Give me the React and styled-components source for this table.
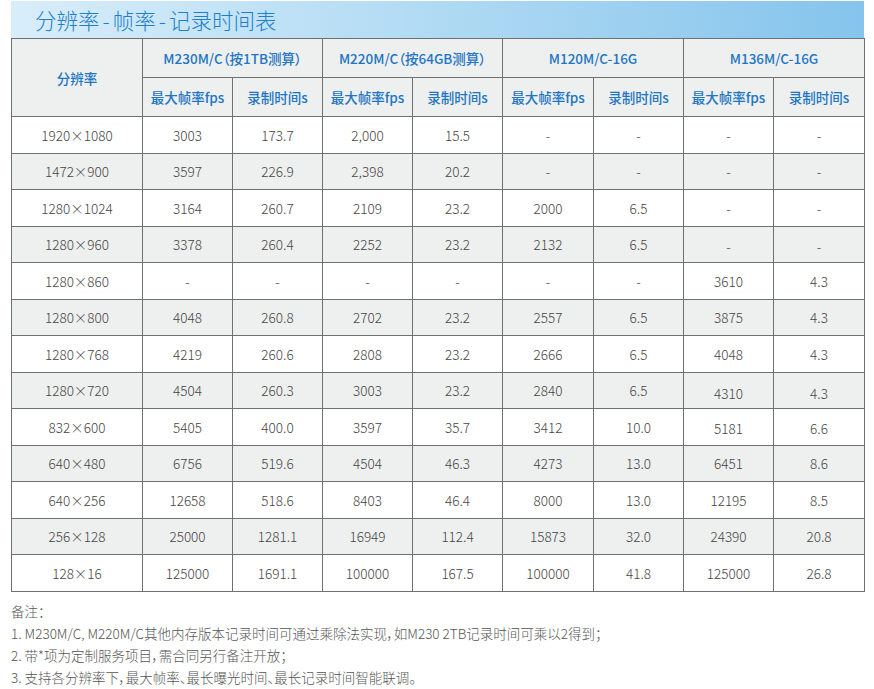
import React from "react";
import styled, { createGlobalStyle } from "styled-components";

const Global = createGlobalStyle`
  html, body { margin: 0; padding: 0; background: #fff; }
  body { font-family: "Noto Sans CJK SC", "Noto Sans", sans-serif; }
`;

const Page = styled.div`
  width: 853px;
  padding: 1px 0 0 11px;
`;

const TitleBar = styled.div`
  height: 37px;
  display: flex;
  align-items: center;
  padding-left: 24px;
  background: linear-gradient(to right, #d8edfa 0%, #b4dcf4 45%, #85c4ec 100%);
`;

const Title = styled.h1`
  margin: 0;
  font-family: "Noto Sans CJK SC", sans-serif;
  font-weight: 300;
  font-size: 21.5px;
  letter-spacing: 0;
  color: #1f80c9;
  line-height: 1;
`;

const Dash = styled.span`
  margin: 0 3px;
`;

const Table = styled.table`
  width: 853px;
  border-collapse: collapse;
  table-layout: fixed;
  font-family: "Noto Sans CJK SC", sans-serif;
`;

const HeadCell = styled.th`
  height: 38px;
  padding: 0;
  border: 1px solid #707070;
  background: #eeefef;
  color: #2176c4;
  font-weight: 500;
  font-size: 13.5px;
  font-feature-settings: "palt";
  text-align: center;
  vertical-align: middle;
`;

const Row = styled.tr`
  height: 36.5px;
  background: ${(p) => (p.$shade ? "#eeefef" : "#ffffff")};
`;

const Cell = styled.td`
  padding: ${(p) => (p.$drop ? `${p.$drop}px 0 0` : "0")};
  border: 1px solid #707070;
  color: #454545;
  font-weight: 300;
  font-size: 13.5px;
  text-align: center;
  vertical-align: middle;
`;

const Notes = styled.div`
  margin-top: 8px;
  font-family: "Noto Sans CJK SC", sans-serif;
  font-weight: 300;
  font-size: 13.5px;
  font-feature-settings: "palt";
  line-height: 22px;
  color: #555;
`;

const widths = [131, 90, 90, 90, 90, 91, 90, 90, 91];

const models = ["M230M/C（按1TB测算）", "M220M/C（按64GB测算）", "M120M/C-16G", "M136M/C-16G"];

const rows = [
  ["1920×1080", "3003", "173.7", "2,000", "15.5", "-", "-", "-", "-"],
  ["1472×900", "3597", "226.9", "2,398", "20.2", "-", "-", "-", "-"],
  ["1280×1024", "3164", "260.7", "2109", "23.2", "2000", "6.5", "-", "-"],
  ["1280×960", "3378", "260.4", "2252", "23.2", "2132", "6.5", "-", "-"],
  ["1280×860", "-", "-", "-", "-", "-", "-", "3610", "4.3"],
  ["1280×800", "4048", "260.8", "2702", "23.2", "2557", "6.5", "3875", "4.3"],
  ["1280×768", "4219", "260.6", "2808", "23.2", "2666", "6.5", "4048", "4.3"],
  ["1280×720", "4504", "260.3", "3003", "23.2", "2840", "6.5", "4310", "4.3"],
  ["832×600", "5405", "400.0", "3597", "35.7", "3412", "10.0", "5181", "6.6"],
  ["640×480", "6756", "519.6", "4504", "46.3", "4273", "13.0", "6451", "8.6"],
  ["640×256", "12658", "518.6", "8403", "46.4", "8000", "13.0", "12195", "8.5"],
  ["256×128", "25000", "1281.1", "16949", "112.4", "15873", "32.0", "24390", "20.8"],
  ["128×16", "125000", "1691.1", "100000", "167.5", "100000", "41.8", "125000", "26.8"],
];

const drops = {
  "3-7": 3, "3-8": 3,
  "7-7": 6, "7-8": 6,
  "8-7": 3, "8-8": 3,
};

export default function App() {
  return (
    <>
      <Global />
      <Page>
        <TitleBar>
          <Title>
            分辨率<Dash>-</Dash>帧率<Dash>-</Dash>记录时间表
          </Title>
        </TitleBar>
        <Table>
          <colgroup>
            {widths.map((w, i) => (
              <col key={i} style={{ width: w }} />
            ))}
          </colgroup>
          <thead>
            <tr>
              <HeadCell rowSpan={2}>分辨率</HeadCell>
              {models.map((m) => (
                <HeadCell key={m} colSpan={2}>{m}</HeadCell>
              ))}
            </tr>
            <tr>
              {models.map((m) => (
                <React.Fragment key={m}>
                  <HeadCell>最大帧率fps</HeadCell>
                  <HeadCell>录制时间s</HeadCell>
                </React.Fragment>
              ))}
            </tr>
          </thead>
          <tbody>
            {rows.map((r, ri) => (
              <Row key={ri} $shade={ri % 2 === 1}>
                {r.map((v, ci) => (
                  <Cell key={ci} $drop={drops[`${ri}-${ci}`]}>{v}</Cell>
                ))}
              </Row>
            ))}
          </tbody>
        </Table>
        <Notes>
          <div>备注：</div>
          <div>1. M230M/C, M220M/C其他内存版本记录时间可通过乘除法实现，如M230 2TB记录时间可乘以2得到；</div>
          <div>2. 带*项为定制服务项目，需合同另行备注开放；</div>
          <div>3. 支持各分辨率下，最大帧率、最长曝光时间、最长记录时间智能联调。</div>
        </Notes>
      </Page>
    </>
  );
}
